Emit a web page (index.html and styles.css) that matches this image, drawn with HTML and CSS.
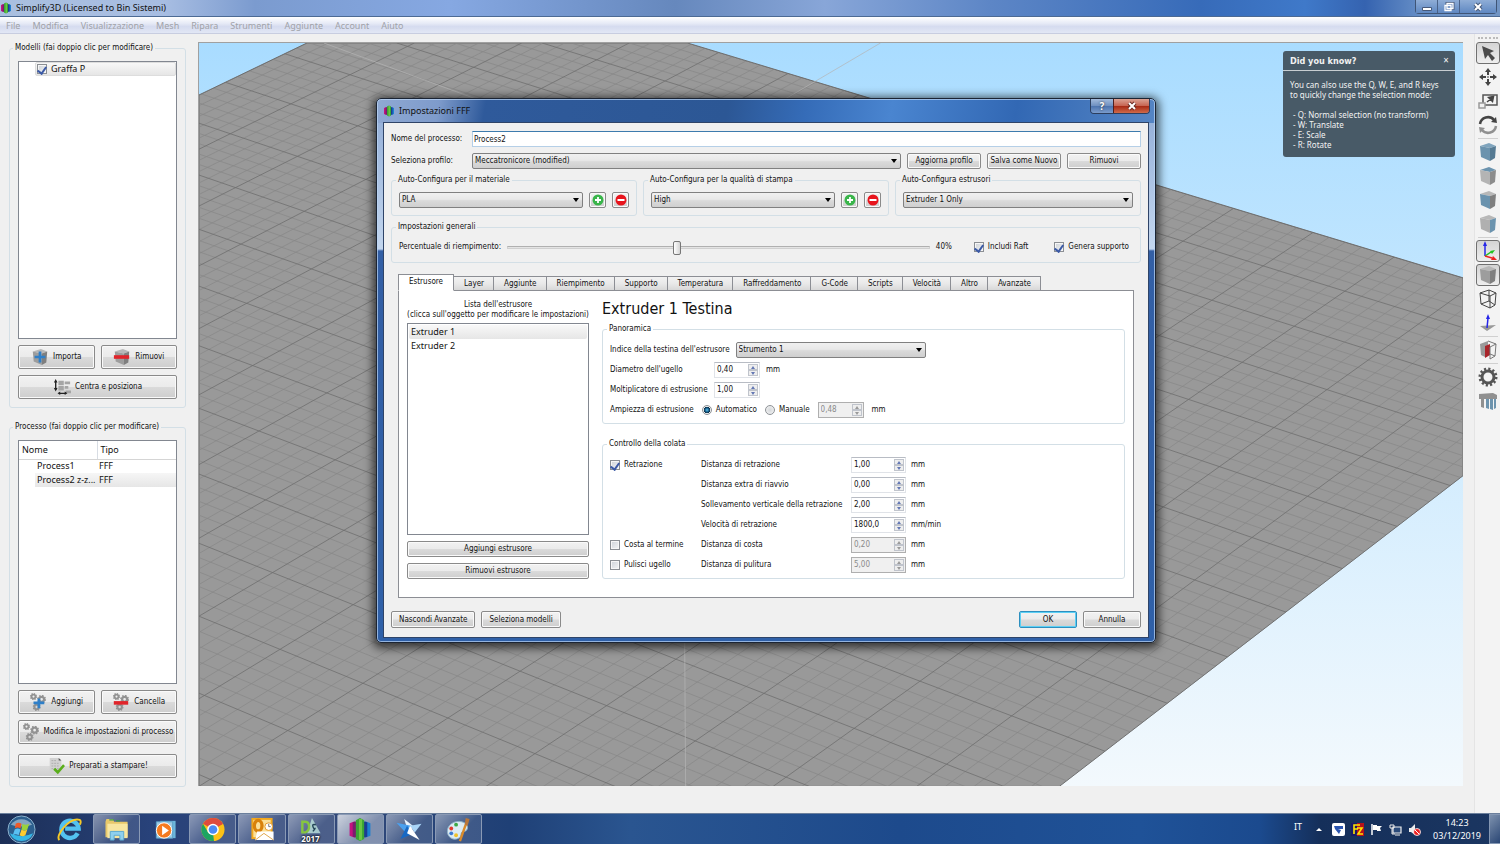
FILE: index.html
```html
<!DOCTYPE html>
<html lang="it">
<head>
    <meta charset="UTF-8">
    <meta name="viewport" content="width=device-width, initial-scale=1.0">
    <title>Simplify3D (Licensed to Bin Sistemi)</title>
    <link rel="stylesheet" href="styles.css">
</head>
<body>
    <!-- Simboli condivisi -->
    <svg class="symbols" aria-hidden="true">
        <symbol id="logo" viewBox="0 0 24 24">
            <path d="M2 6l5-2v16l-5-2z" fill="#c4127e"/>
            <path d="M5 5l4-1v16l-4-1z" fill="#7a1d6e"/>
            <path d="M22 6l-5-2v16l5-2z" fill="#1c7fd0"/>
            <path d="M19 5l-4-1v16l4-1z" fill="#1b3c92"/>
            <path d="M8 3l4-2 4 2v18l-4 2-4-2z" fill="#3aa535"/>
            <path d="M11 2h3v20h-3z" fill="#6cc644"/>
        </symbol>
        <symbol id="cube" viewBox="0 0 20 20">
            <path class="top" d="M2 4l9-3 7 3-6 2z"/>
            <path class="front" d="M2 4l10 2v13l-9-4z"/>
            <path class="side" d="M12 6l6-2-1 12-5 3z"/>
        </symbol>
        <symbol id="gear" viewBox="0 0 20 20">
            <circle cx="10" cy="10" r="6" fill="none" stroke="currentColor" stroke-width="3"/>
            <circle cx="10" cy="10" r="8" fill="none" stroke="currentColor" stroke-width="3" stroke-dasharray="2.1 2.09"/>
        </symbol>
        <symbol id="small-gear" viewBox="0 0 20 20">
            <circle cx="10" cy="10" r="5.500" fill="none" stroke="currentColor" stroke-width="5"/>
            <circle cx="10" cy="10" r="8.500" fill="none" stroke="currentColor" stroke-width="3" stroke-dasharray="3.340 3.340"/>
        </symbol>
        <symbol id="add" viewBox="0 0 12 12">
            <circle cx="6" cy="6" r="5.500" fill="#39b54a"/>
            <path d="M6 3v6M3 6h6" stroke="#fff" stroke-width="1.800"/>
        </symbol>
        <symbol id="remove" viewBox="0 0 12 12">
            <circle cx="6" cy="6" r="5.500" fill="#e8141c"/>
            <path d="M2.500 6h7" stroke="#fff" stroke-width="2"/>
        </symbol>
    </svg>

    <header class="titlebar">
        <svg class="app-logo"><use href="#logo"/></svg>
        <h1>Simplify3D (Licensed to Bin Sistemi)</h1>
        <div class="window-buttons">
            <button type="button" aria-label="Riduci a icona"><svg viewBox="0 0 12 10"><path d="M1.500 5.500h9v3h-9z" fill="#fff" stroke="#46597a"/></svg></button>
            <button type="button" aria-label="Ripristina"><svg viewBox="0 0 12 10"><path d="M4 1.500h6v5H4z" fill="none" stroke="#46597a" stroke-width="3"/><path d="M4 1.500h6v5H4zM2 3.500h6v5H2z" fill="#5a7fb8" stroke="#fff" stroke-width="1.300"/></svg></button>
            <button type="button" class="wide" aria-label="Chiudi"><svg viewBox="0 0 12 10"><path d="M3 2l6 6M9 2L3 8" stroke="#46597a" stroke-width="4"/><path d="M3 2l6 6M9 2L3 8" stroke="#fff" stroke-width="2"/></svg></button>
        </div>
    </header>

    <nav class="menubar">
        <a href="#">File</a>
        <a href="#">Modifica</a>
        <a href="#">Visualizzazione</a>
        <a href="#">Mesh</a>
        <a href="#">Ripara</a>
        <a href="#">Strumenti</a>
        <a href="#">Aggiunte</a>
        <a href="#">Account</a>
        <a href="#">Aiuto</a>
    </nav>

    <main class="workspace">
        <aside class="sidebar">
            <fieldset class="panel">
                <legend>Modelli (fai doppio clic per modificare)</legend>
                <div class="list">
                    <label class="model selected"><input type="checkbox" checked> Graffa P</label>
                </div>
                <div class="button-row">
                    <button type="button" class="btn big">
                        <svg class="icon grey-cube" viewBox="0 0 20 20"><use href="#cube"/><path d="M10 4v12M4 10h12" stroke="#2f7fc8" stroke-width="3"/></svg>
                        Importa
                    </button>
                    <button type="button" class="btn big">
                        <svg class="icon grey-cube" viewBox="0 0 20 20"><use href="#cube"/><path d="M1 10h17" stroke="#e0242a" stroke-width="4"/></svg>
                        Rimuovi
                    </button>
                </div>
                <button type="button" class="btn big">
                    <svg class="icon" viewBox="0 0 20 20"><path d="M6 3h6v5H6zM13 4h6v3h-6zM6 9h6v5H6zM13 9h4v3h-4zM14 14h6v3h-6z" fill="#a5a5a5"/><path d="M3 4v9M7 17h7" stroke="#222" stroke-width="1.500"/><path d="M3 1l2 4H1zM3 15l2-4H1zM5 17l3-2v4zM16 17l-3-2v4z" fill="#222"/></svg>
                    Centra e posiziona
                </button>
            </fieldset>

            <fieldset class="panel">
                <legend>Processo (fai doppio clic per modificare)</legend>
                <div class="list">
                    <table class="processes">
                        <thead>
                            <tr><th>Nome</th><th>Tipo</th></tr>
                        </thead>
                        <tbody>
                            <tr><td>Process1</td><td>FFF</td></tr>
                            <tr class="selected"><td>Process2 z-z...</td><td>FFF</td></tr>
                        </tbody>
                    </table>
                </div>
                <div class="button-row">
                    <button type="button" class="btn big">
                        <svg class="icon gears" viewBox="0 0 20 20"><use href="#small-gear" x="1" y="0" width="8" height="8"/><use href="#small-gear" x="9" y="2" width="10" height="10"/><use href="#small-gear" x="4" y="11" width="9" height="9"/><path d="M11 6v11M5 11h12" stroke="#2f7fc8" stroke-width="3"/></svg>
                        Aggiungi
                    </button>
                    <button type="button" class="btn big">
                        <svg class="icon gears" viewBox="0 0 20 20"><use href="#small-gear" x="1" y="0" width="8" height="8"/><use href="#small-gear" x="9" y="2" width="10" height="10"/><use href="#small-gear" x="4" y="11" width="9" height="9"/><path d="M2 11h16" stroke="#e0242a" stroke-width="4"/></svg>
                        Cancella
                    </button>
                </div>
                <button type="button" class="btn big">
                    <svg class="icon gears" viewBox="0 0 20 20"><use href="#small-gear" x="1" y="0" width="8" height="8"/><use href="#small-gear" x="9" y="3" width="10" height="10"/><use href="#small-gear" x="4" y="11" width="9" height="9"/></svg>
                    Modifica le impostazioni di processo
                </button>
                <button type="button" class="btn big prepare">
                    <svg class="icon" viewBox="0 0 20 20"><path d="M3 1h10l3 3v14H3z" fill="#d2d2d2"/><path d="M13 1l3 3h-3z" fill="#555"/><path d="M5 4h6M5 7h9M5 10h9M5 13h9" stroke="#aaa" stroke-dasharray="2 1"/><path d="M8 13l4 4 7-8" fill="none" stroke="#5aae1c" stroke-width="3"/></svg>
                    Preparati a stampare!
                </button>
            </fieldset>
        </aside>

        <section class="viewport">
            <svg id="scene" class="scene" viewBox="0 0 1265 744" preserveAspectRatio="xMinYMin slice">
                <clipPath id="bed"><path d="M0 52L108 0h381l776 235v198L861 744H0z"/></clipPath>
                <path class="bed" d="M0 52L108 0h381l776 235v198L861 744H0z"/>
                <g id="minor" class="minor" clip-path="url(#bed)"></g>
                <g id="major" class="major" clip-path="url(#bed)"></g>
                <path class="volume" d="M125 0l250 92M682 0L580 60M486 590l1 154"/>
            </svg>
            <div class="tip">
                <div class="tip-head">
                    <strong>Did you know?</strong>
                    <button type="button" aria-label="Close">✕</button>
                </div>
                <div class="tip-body">
                    <p>You can also use the Q, W, E, and R keys<br>to quickly change the selection mode:</p>
                    <ul>
                        <li>- Q: Normal selection (no transform)</li>
                        <li>- W: Translate</li>
                        <li>- E: Scale</li>
                        <li>- R: Rotate</li>
                    </ul>
                </div>
            </div>
        </section>

        <div class="toolbar">
            <button type="button" class="active" aria-label="Seleziona"><svg viewBox="0 0 20 20"><path d="M4 3l12 5-4 2 5 5-3 3-4-6-3 4z" fill="#4a4a4a"/></svg></button>
            <button type="button" aria-label="Sposta"><svg viewBox="0 0 20 20"><path d="M10 1l3 4H7zM10 19l3-4H7zM1 10l4-3v6zM19 10l-4-3v6z" fill="#444"/><path d="M10 5v3M10 12v3M5 10h3M12 10h3" stroke="#444" stroke-width="2"/><path d="M9 9h2v2H9z" fill="#999"/></svg></button>
            <button type="button" aria-label="Scala"><svg viewBox="0 0 20 20"><path d="M5 4h14v10H5z" fill="none" stroke="#555" stroke-width="1.500"/><path d="M1 12h6v5H1z" fill="#f0f0f0" stroke="#999" stroke-width="1.500"/><path d="M9 11l5-4M15.500 5.500l-1 5-4-4z" stroke="#444" stroke-width="1.500" fill="#444"/></svg></button>
            <button type="button" aria-label="Ruota"><svg viewBox="0 0 20 20"><path d="M2 9a8 8 0 0 1 14-4" fill="none" stroke="#444" stroke-width="2.500"/><path d="M19 8l-6-1 5-5z" fill="#444"/><path d="M18 11a8 8 0 0 1-14 4" fill="none" stroke="#909090" stroke-width="2.500"/><path d="M1 12l6 1-5 5z" fill="#909090"/></svg></button>
            <hr>
            <button type="button" class="cube-all" aria-label="Vista predefinita"><svg><use href="#cube"/></svg></button>
            <button type="button" class="cube-top" aria-label="Vista superiore"><svg><use href="#cube"/></svg></button>
            <button type="button" class="cube-front" aria-label="Vista frontale"><svg><use href="#cube"/></svg></button>
            <button type="button" class="cube-side" aria-label="Vista laterale"><svg><use href="#cube"/></svg></button>
            <hr>
            <button type="button" class="active" aria-label="Assi"><svg viewBox="0 0 20 20"><path d="M7 15V4" stroke="#2626e8" stroke-width="1.500"/><path d="M7 0l2 5H5z" fill="#2626e8"/><path d="M7 15l6-4" stroke="#1fc41f" stroke-width="1.500"/><path d="M17 9l-3 4-2-3z" fill="#1fc41f"/><path d="M7 15l7 2" stroke="#e22" stroke-width="1.500"/><path d="M19 19l-6 0 2-4z" fill="#e22"/></svg></button>
            <button type="button" class="active" aria-label="Solido"><svg class="grey-cube"><use href="#cube"/></svg></button>
            <button type="button" aria-label="Wireframe"><svg viewBox="0 0 20 20"><path d="M2 4l9-3 7 3-6 3zM2 4l1 11 9 4V7M18 4l-1 12-5 3M11 1v11l-8 3M11 12l6 4" fill="none" stroke="#444"/></svg></button>
            <button type="button" aria-label="Normali"><svg viewBox="0 0 20 20"><path d="M2 13l16-1-9 6z" fill="#999"/><path d="M9 15l1-10" stroke="#2626e8" stroke-width="1.500"/><path d="M10 1l2 5H8z" fill="#2626e8"/></svg></button>
            <hr>
            <button type="button" aria-label="Sezione"><svg viewBox="0 0 20 20"><path d="M2 4l8-3v4l-3 2v10l-4-2z" fill="#9a9a9a"/><path d="M7 6l5-2v11l-5 3z" fill="#a8242a"/><path d="M10 1l8 3-1 12-5 3V7l6-3M12 14l5 2" fill="none" stroke="#777"/></svg></button>
            <hr>
            <button type="button" class="dark" aria-label="Impostazioni"><svg><use href="#gear"/></svg></button>
            <button type="button" aria-label="Supporti"><svg viewBox="0 0 20 20"><path d="M1 3l14-1 4 2v4H6v9l-3-1V8H1z" fill="#909090"/><path d="M8 8h3v10l-3-1zM12 8h3v11l-3-1zM16 8h2v9l-2 1z" fill="#6d93ad"/></svg></button>
        </div>
    </main>

    <footer class="taskbar">
        <button type="button" class="start" aria-label="Start">
            <svg viewBox="0 0 30 30"><circle cx="15" cy="15" r="14" fill="#2c5f8e" stroke="#8fb4cf"/><path d="M3 19a13 13 0 0 0 24 0q-12 6-24 0z" fill="#35b7e6"/><path d="M4 10a13 12 0 0 1 22 0q-11 4-22 0z" fill="#a9c3d6" opacity=".7"/><path d="M9 9q3-2 6 0l-1 5q-3-2-6 0z" fill="#f05a28"/><path d="M16 9q3 2 7 0l-2 6q-3 2-6 0z" fill="#9ad23c"/><path d="M8 15q3-2 6 0l-2 6q-3-2-6 0z" fill="#5ac0f2"/><path d="M15 15q3 2 6 0l-2 6q-3 2-6 0z" fill="#fccb2f"/></svg>
        </button>
        <div class="apps">
            <button type="button" aria-label="Internet Explorer"><svg viewBox="0 0 26 26"><path d="M22 17a9 9 0 1 1 1-5H9" fill="none" stroke="#53c1f0" stroke-width="4.500"/><path d="M3 24C-2 19 14 0 24 3c2 1 1 4 0 5" fill="none" stroke="#f6c927" stroke-width="2"/></svg></button>
            <button type="button" class="open" aria-label="Esplora risorse"><svg viewBox="0 0 26 26"><path d="M1 5l1-3h7l1 3h14v16H1z" fill="#e8c86a"/><path d="M3 7h21v15H3z" fill="#f8e6a0"/><path d="M5 3h5M12 4h4" stroke="#3a9c4a" stroke-width="1.500"/><path d="M6 24v-9h14v9h-4v-5h-6v5z" fill="#8fd0ee" stroke="#5aa9d0"/></svg></button>
            <button type="button" aria-label="Windows Media Player"><svg viewBox="0 0 26 26"><path d="M8 4h16v18H8z" fill="#6cb6dc"/><path d="M4 5h17v17H4z" fill="#9dcbe4" stroke="#5b9fc9"/><circle cx="12" cy="14" r="8" fill="#f47a20" stroke="#fff"/><path d="M10 9l7 5-7 5z" fill="#fff"/></svg></button>
            <button type="button" class="open" aria-label="Chrome"><svg viewBox="0 0 26 26"><circle cx="13" cy="13" r="12" fill="#fbc116"/><path d="M13 13L2.600 7A12 12 0 0 1 23.400 7z" fill="#dd4b3e"/><path d="M2.600 7L8 16l5 0 1 9A12 12 0 0 1 2.600 7z" fill="#1da462"/><path d="M13 7h10.400L13 13z" fill="#dd4b3e"/><circle cx="13" cy="13" r="6" fill="#fff"/><circle cx="13" cy="13" r="4.500" fill="#4a8af4"/></svg></button>
            <button type="button" class="open" aria-label="Outlook"><svg viewBox="0 0 26 26"><path d="M2 1h22v22H2z" fill="#f2a81d"/><path d="M4 3h18v18H4z" fill="#fbe09a"/><ellipse cx="9" cy="9" rx="4" ry="5.500" fill="none" stroke="#d9820c" stroke-width="3.500"/><path d="M8 15h17v9H6z" fill="#fff"/><path d="M6 24l9-7 10 7" fill="none" stroke="#e0a64a"/><circle cx="20" cy="10" r="4" fill="#fff" stroke="#e79a28"/><path d="M20 7v3h2" stroke="#777" fill="none"/></svg></button>
            <button type="button" class="open" aria-label="DraftSight 2017"><svg viewBox="0 0 26 26"><path d="M14 1l9 16H9z" fill="#b6dcd8" opacity=".85"/><path d="M4 5h3q4 0 4 5t-4 6H4z" fill="none" stroke="#86c540" stroke-width="2.500"/><path d="M18 8q-4-1-3 2t2 2-2 3" fill="none" stroke="#245" stroke-width="1.500"/></svg><span class="year">2017</span></button>
            <button type="button" class="open current" aria-label="Simplify3D"><svg><use href="#logo"/></svg></button>
            <button type="button" class="open" aria-label="Slicer"><svg viewBox="0 0 26 26"><path d="M8 2l10 8-6 5z" fill="#e8f3fc"/><path d="M0 6l15 3-4 9z" fill="#4aa0ee"/><path d="M14 9l12-2-7 9z" fill="#a9d4f7"/><path d="M11 9l-7 14 12-5z" fill="#1768c4"/><path d="M14 9l10 15-13-7z" fill="#fff"/></svg></button>
            <button type="button" class="open" aria-label="Paint"><svg viewBox="0 0 26 26"><path d="M2 16C1 8 10 3 17 5c8 2 7 10 2 10-4 0-2 4-4 6-4 4-12 2-13-5z" fill="#dcebf3" stroke="#8fb3c9"/><circle cx="6" cy="12" r="2" fill="#e0392f"/><circle cx="11" cy="8" r="2" fill="#3aa845"/><circle cx="6" cy="17" r="2" fill="#3b7bd4"/><circle cx="11" cy="19" r="2" fill="#f0c22a"/><path d="M21 8l-6 17" stroke="#d98a2b" stroke-width="2.500"/><path d="M20 8l1-7 4 1-2 7z" fill="#b8763a"/></svg></button>
        </div>
        <div class="tray">
            <span class="lang">IT</span>
            <svg class="caret" viewBox="0 0 6 4"><path d="M0 4l3-3 3 3z" fill="#fff"/></svg>
            <svg viewBox="0 0 13 13"><rect width="13" height="13" rx="2" fill="#fff"/><path d="M2 3h9v3H6l3 1-2 4-4-5z" fill="#2a55b0"/></svg>
            <svg viewBox="0 0 13 13"><path d="M0 0h13v13H0z" fill="#b5121b"/><path d="M0 0h6v13H0z" fill="#1a1a66"/><path d="M3 11V2h6M3 6h4M6 5h5l-4 6h5" fill="none" stroke="#ffe600" stroke-width="1.600"/></svg>
            <svg viewBox="0 0 13 13"><path d="M2 1v11" stroke="#fff" stroke-width="1.500"/><path d="M3 2h4v1h5l-2 2 1 3H7V7H3z" fill="#fff"/></svg>
            <svg viewBox="0 0 13 13"><path d="M4 4h8v6H4zM6 12h5" fill="#2a4a7a" stroke="#eee" stroke-width="1.200"/><path d="M1 2h4v3H1zM3 5v6h3" fill="none" stroke="#eee"/></svg>
            <svg viewBox="0 0 13 13"><path d="M1 5h2l4-4v11L3 9H1z" fill="#eee"/><circle cx="9" cy="9" r="3.500" fill="#e22" stroke="#fff" stroke-width=".8"/><path d="M7 7l4 4" stroke="#fff"/></svg>
            <time class="clock" datetime="2019-12-03T14:23"><span>14:23</span><span>03/12/2019</span></time>
            <button type="button" class="show-desktop" aria-label="Mostra desktop"></button>
        </div>
    </footer>

    <!-- Finestra impostazioni -->
    <div class="dialog" role="dialog" aria-labelledby="dialogTitle">
        <div class="dialog-title">
            <svg class="app-logo"><use href="#logo"/></svg>
            <h2 id="dialogTitle">Impostazioni FFF</h2>
            <div class="dialog-buttons">
                <button type="button" aria-label="Guida">?</button>
                <button type="button" class="close" aria-label="Chiudi"><svg viewBox="0 0 12 10"><path d="M3 2l6 6M9 2L3 8" stroke="#6b2a22" stroke-width="4"/><path d="M3 2l6 6M9 2L3 8" stroke="#fff" stroke-width="2"/></svg></button>
            </div>
        </div>

        <form class="dialog-body">
            <div class="row">
                <label class="main-label" for="nome">Nome del processo:</label>
                <input class="text" type="text" id="nome" value="Process2" autofocus>
            </div>
            <div class="row">
                <label class="main-label" for="profilo">Seleziona profilo:</label>
                <div class="select"><select id="profilo"><option>Meccatronicore (modified)</option></select></div>
                <button type="button" class="btn third">Aggiorna profilo</button>
                <button type="button" class="btn third">Salva come Nuovo</button>
                <button type="button" class="btn third">Rimuovi</button>
            </div>

            <div class="auto">
                <fieldset class="group">
                    <legend>Auto-Configura per il materiale</legend>
                    <div class="row">
                        <div class="select"><select aria-label="Materiale"><option>PLA</option></select></div>
                        <button type="button" class="btn square" aria-label="Aggiungi materiale"><svg><use href="#add"/></svg></button>
                        <button type="button" class="btn square" aria-label="Rimuovi materiale"><svg><use href="#remove"/></svg></button>
                    </div>
                </fieldset>
                <fieldset class="group">
                    <legend>Auto-Configura per la qualità di stampa</legend>
                    <div class="row">
                        <div class="select"><select aria-label="Qualità"><option>High</option></select></div>
                        <button type="button" class="btn square" aria-label="Aggiungi qualità"><svg><use href="#add"/></svg></button>
                        <button type="button" class="btn square" aria-label="Rimuovi qualità"><svg><use href="#remove"/></svg></button>
                    </div>
                </fieldset>
                <fieldset class="group">
                    <legend>Auto-Configura estrusori</legend>
                    <div class="row">
                        <div class="select"><select aria-label="Estrusori"><option>Extruder 1 Only</option></select></div>
                    </div>
                </fieldset>
            </div>

            <fieldset class="group general">
                <legend>Impostazioni generali</legend>
                <div class="row">
                    <label for="riempimento">Percentuale di riempimento:</label>
                    <input class="slider" type="range" id="riempimento" min="0" max="100" value="40">
                    <output for="riempimento">40%</output>
                    <label class="check"><input type="checkbox" checked> Includi Raft</label>
                    <label class="check"><input type="checkbox" checked> Genera supporto</label>
                </div>
            </fieldset>

            <div class="tabs" role="tablist">
                <button type="button" role="tab" aria-selected="true">Estrusore</button>
                <button type="button" role="tab">Layer</button>
                <button type="button" role="tab">Aggiunte</button>
                <button type="button" role="tab">Riempimento</button>
                <button type="button" role="tab">Supporto</button>
                <button type="button" role="tab">Temperatura</button>
                <button type="button" role="tab">Raffreddamento</button>
                <button type="button" role="tab">G-Code</button>
                <button type="button" role="tab">Scripts</button>
                <button type="button" role="tab">Velocità</button>
                <button type="button" role="tab">Altro</button>
                <button type="button" role="tab">Avanzate</button>
            </div>

            <div class="tab-panel">
                <div class="extruders">
                    <p>Lista dell'estrusore<br>(clicca sull'oggetto per modificare le impostazioni)</p>
                    <ul class="list">
                        <li class="selected">Extruder 1</li>
                        <li>Extruder 2</li>
                    </ul>
                    <button type="button" class="btn">Aggiungi estrusore</button>
                    <button type="button" class="btn">Rimuovi estrusore</button>
                </div>

                <div class="details">
                    <h3>Extruder 1 Testina</h3>
                    <fieldset class="group overview">
                        <legend>Panoramica</legend>
                        <div class="row">
                            <label for="indice">Indice della testina dell'estrusore</label>
                            <div class="select index"><select id="indice"><option>Strumento 1</option></select></div>
                        </div>
                        <div class="row">
                            <label class="nozzle-label" for="diametro">Diametro dell'ugello</label>
                            <span class="spin"><input type="text" id="diametro" value="0,40"><span class="arrows"><button type="button" aria-label="Su"></button><button type="button" aria-label="Giù"></button></span></span>
                            <span>mm</span>
                        </div>
                        <div class="row">
                            <label class="nozzle-label" for="moltiplicatore">Moltiplicatore di estrusione</label>
                            <span class="spin"><input type="text" id="moltiplicatore" value="1,00"><span class="arrows"><button type="button" aria-label="Su"></button><button type="button" aria-label="Giù"></button></span></span>
                        </div>
                        <div class="row width-row">
                            <span>Ampiezza di estrusione</span>
                            <label class="check"><input type="radio" name="ampiezza" checked> Automatico</label>
                            <label class="check"><input type="radio" name="ampiezza"> Manuale</label>
                            <span class="spin"><input type="text" aria-label="Ampiezza" value="0,48" disabled><span class="arrows"><button type="button" aria-label="Su" disabled></button><button type="button" aria-label="Giù" disabled></button></span></span>
                            <span>mm</span>
                        </div>
                    </fieldset>

                    <fieldset class="group ooze">
                        <legend>Controllo della colata</legend>
                        <div class="ooze-grid">
                            <label class="check"><input type="checkbox" checked> Retrazione</label>
                            <label for="retrazione">Distanza di retrazione</label>
                            <span class="spin"><input type="text" id="retrazione" value="1,00"><span class="arrows"><button type="button" aria-label="Su"></button><button type="button" aria-label="Giù"></button></span></span>
                            <span>mm</span>

                            <label class="second" for="riavvio">Distanza extra di riavvio</label>
                            <span class="spin"><input type="text" id="riavvio" value="0,00"><span class="arrows"><button type="button" aria-label="Su"></button><button type="button" aria-label="Giù"></button></span></span>
                            <span>mm</span>

                            <label class="second" for="sollevamento">Sollevamento verticale della retrazione</label>
                            <span class="spin"><input type="text" id="sollevamento" value="2,00"><span class="arrows"><button type="button" aria-label="Su"></button><button type="button" aria-label="Giù"></button></span></span>
                            <span>mm</span>

                            <label class="second" for="velocita">Velocità di retrazione</label>
                            <span class="spin"><input type="text" id="velocita" value="1800,0"><span class="arrows"><button type="button" aria-label="Su"></button><button type="button" aria-label="Giù"></button></span></span>
                            <span>mm/min</span>

                            <label class="check"><input type="checkbox"> Costa al termine</label>
                            <label for="costa">Distanza di costa</label>
                            <span class="spin"><input type="text" id="costa" value="0,20" disabled><span class="arrows"><button type="button" aria-label="Su" disabled></button><button type="button" aria-label="Giù" disabled></button></span></span>
                            <span>mm</span>

                            <label class="check"><input type="checkbox"> Pulisci ugello</label>
                            <label for="pulitura">Distanza di pulitura</label>
                            <span class="spin"><input type="text" id="pulitura" value="5,00" disabled><span class="arrows"><button type="button" aria-label="Su" disabled></button><button type="button" aria-label="Giù" disabled></button></span></span>
                            <span>mm</span>
                        </div>
                    </fieldset>
                </div>
            </div>

            <div class="dialog-footer">
                <button type="button" class="btn">Nascondi Avanzate</button>
                <button type="button" class="btn">Seleziona modelli</button>
                <button type="submit" class="btn ok">OK</button>
                <button type="button" class="btn cancel">Annulla</button>
            </div>
        </form>
    </div>

    <script src="script.js"></script>
</body>
</html>
```
FILE: styles.css
```css
:root {
    --ui: "DejaVu Sans Condensed", "DejaVu Sans", sans-serif;
    --segoe: "Noto Sans", "Open Sans", sans-serif;
    --face: #f0f0f0;
    --group: #d3dfe6;
    --edge: #828790;
    --text: #111;
}

* {
    margin: 0;
    padding: 0;
    box-sizing: border-box;
}

body {
    height: 100vh;
    display: flex;
    flex-direction: column;
    position: relative;
    overflow: hidden;
    background: var(--face);
    color: var(--text);
    font-family: var(--ui);
    font-size: 8px;
    line-height: 10px;
}

button,
input,
select {
    font: inherit;
    color: inherit;
}

button {
    border: none;
    background: none;
}

ul {
    list-style: none;
}

.symbols {
    width: 0;
    height: 0;
    position: absolute;
}

/* Barra del titolo */
.titlebar {
    height: 17px;
    display: flex;
    align-items: center;
    border-bottom: 1px solid #4c6a94;
    background: linear-gradient(90deg, #a9bfdf 0, #a7bde2 11%, #7b9bcf 17%, #86a8e2 30%, #6688bd 45%, #88a6d8 55%, #5d86c6 66%, #376bb9 80%, #3f79c9 87%, #3563b0 91%, #6a92c8 95%, #7295c4 100%);
    font-family: var(--segoe);
}

.app-logo {
    width: 12px;
    height: 12px;
}

.titlebar h1 {
    flex: 1;
    margin-left: 4px;
    font-size: 9px;
    font-weight: 400;
}

.window-buttons {
    display: flex;
    align-self: flex-start;
    margin-right: 3px;
    border: 1px solid #3f5576;
    border-top: none;
    border-radius: 0 0 4px 4px;
}

.window-buttons button {
    width: 22px;
    height: 13px;
    display: grid;
    place-items: center;
    border-right: 1px solid #4a6288;
    background: linear-gradient(#8fadd6, #5f88c2);
}

.window-buttons .wide {
    width: 36px;
    border-right: none;
}

.window-buttons svg {
    width: 12px;
    height: 10px;
}

/* Menu */
.menubar {
    height: 17px;
    display: flex;
    align-items: center;
    gap: 12px;
    padding: 1px 6px 0;
    border-bottom: 1px solid #c8cde0;
    background: linear-gradient(#fff, #e6eaf6 40%, #d5dbef 60%, #e2e7f5);
    font-family: var(--segoe);
    font-size: 9px;
}

.menubar a {
    color: #a0a2a8;
    text-decoration: none;
}

/* Area di lavoro */
.workspace {
    flex: 1;
    display: flex;
    min-height: 0;
}

.sidebar {
    width: 198px;
    display: flex;
    flex-direction: column;
    gap: 14px;
    padding: 9px 12px 26px 9px;
}

.panel {
    flex: 1;
    min-height: 0;
    min-width: 0;
    display: flex;
    flex-direction: column;
    gap: 6px;
    padding: 8px;
    border: 1px solid var(--group);
    border-radius: 3px;
}

.panel legend {
    margin-left: -5px;
    padding: 0 2px;
}

.list {
    flex: 1;
    border: 1px solid var(--edge);
    background: #fff;
}

.selected {
    background: linear-gradient(#f8f8f8, #e6e6e6);
    border-radius: 2px;
}

.model {
    display: flex;
    align-items: center;
    gap: 4px;
    height: 14px;
    margin-left: 16px;
    padding-left: 1px;
    border: 1px solid #ddd;
    font-family: var(--segoe);
    font-size: 9px;
}

.processes {
    width: 100%;
    table-layout: fixed;
    border-collapse: collapse;
    font-family: var(--segoe);
    font-size: 9px;
}

.processes th {
    height: 18px;
    padding-left: 3px;
    border-bottom: 1px solid #d5d5d5;
    font-weight: 400;
    text-align: left;
}

.processes th + th {
    border-left: 1px solid #d8dde4;
}

.processes th:first-child {
    width: 78px;
}

.processes td {
    height: 14px;
    padding-left: 2px;
    white-space: nowrap;
}

.processes tr.selected {
    background: none;
}

.processes td:first-child {
    padding-left: 18px;
}

.processes .selected td {
    background: linear-gradient(#f6f6f6, #e6e6e6);
}

.processes .selected td:first-child {
    background: linear-gradient(90deg, #fff 16px, transparent 16px), linear-gradient(#f6f6f6, #e6e6e6);
}

.button-row {
    display: flex;
    gap: 6px;
}

.button-row .btn {
    flex: 1;
}

.btn {
    height: 16px;
    display: flex;
    align-items: center;
    justify-content: center;
    border: 1px solid #8a8a8a;
    border-radius: 2px;
    box-shadow: inset 0 0 0 1px #fafafa;
    background: linear-gradient(#f2f2f2, #ebebeb 48%, #dadada 52%, #cecece);
    white-space: nowrap;
}

.btn.big {
    height: 24px;
    gap: 4px;
}

.prepare {
    margin-top: 4px;
}

.icon {
    flex: none;
    width: 18px;
    height: 18px;
}

.gears {
    color: #929292;
}

.grey-cube,
.toolbar button {
    --top: #b8b8b8;
    --front: #9d9d9d;
    --side: #7f7f7f;
}

.top {
    fill: var(--top);
}

.front {
    fill: var(--front);
}

.side {
    fill: var(--side);
}

/* Vista 3D */
.viewport {
    flex: 1;
    min-width: 0;
    position: relative;
    margin: 8px 11px 27px 0;
    border-top: 1px solid #a0a0a0;
    border-left: 1px solid #a0a0a0;
    background: linear-gradient(#a9dcff, #f3f9fd);
}

.scene {
    display: block;
    width: 100%;
    height: 100%;
}

.bed {
    fill: #999;
    stroke: #707070;
}

.minor {
    stroke: #868686;
    stroke-width: .7;
}

.major {
    stroke: #6e6e6e;
    stroke-width: .8;
}

.volume {
    fill: none;
    stroke: #b4b4b4;
    stroke-width: .7;
}

.tip {
    position: absolute;
    top: 8px;
    right: 8px;
    width: 172px;
    border-radius: 3px;
    background: #485a67;
    color: #f2f2f2;
}

.tip-head {
    height: 20px;
    display: flex;
    align-items: center;
    justify-content: space-between;
    padding: 1px 6px 0 7px;
    border-bottom: 1px solid #c8ced2;
}

.tip-head strong {
    font-size: 9px;
}

.tip-body {
    padding: 9px 7px 7px;
    font-family: var(--segoe);
}

.tip-body ul {
    margin-top: 10px;
    padding-left: 3px;
}

/* Barra strumenti */
.toolbar {
    width: 26px;
    display: flex;
    flex-direction: column;
    align-items: center;
    gap: 2px;
    padding-top: 3px;
    border-left: 1px solid #e4e4e4;
    background: #f3f3f3;
}

.toolbar::before {
    content: '';
    width: 20px;
    border-top: 2px dotted #bbb;
    margin-bottom: 1px;
}

.toolbar button {
    width: 24px;
    height: 22px;
    display: grid;
    place-items: center;
}

.toolbar .active {
    border: 1px solid #707070;
    border-radius: 3px;
    background: linear-gradient(#d4d4d4, #eee);
}

.toolbar svg {
    width: 20px;
    height: 20px;
}

.toolbar hr {
    width: 20px;
    height: 1px;
    border: none;
    background: #d0d0d0;
}

.toolbar .cube-all {
    --top: #7fa4bd;
    --front: #6b93ae;
    --side: #557a93;
}

.toolbar .cube-top {
    --top: #6b93ae;
    --front: #b4b4b4;
    --side: #8c8c8c;
}

.toolbar .cube-front {
    --front: #6b93ae;
}

.toolbar .cube-side {
    --front: #b0b0b0;
    --side: #6b93ae;
}

.toolbar .dark {
    color: #555;
}

/* Barra delle applicazioni */
.taskbar {
    height: 31px;
    display: flex;
    align-items: stretch;
    border-top: 1px solid #6b7f9c;
    background: linear-gradient(90deg, #1c2f57 0, #28427a 10%, #33497a 22%, #1f4076 34%, #2a5590 42%, #1d4a8c 60%, #1f5298 76%, #1b4a8e 84%, #152f5a 88%, #1b3661 100%);
    color: #fff;
    font-family: var(--segoe);
    font-size: 9px;
}

.start {
    width: 42px;
    display: grid;
    place-items: center;
}

.start svg {
    width: 29px;
    height: 29px;
}

.apps {
    width: 436px;
    display: flex;
    gap: 2px;
    margin-left: 4px;
}

.apps button {
    flex: 1;
    display: grid;
    place-items: center;
    position: relative;
    border-radius: 2px;
}

.apps .open {
    border: 1px solid #8a9ab5;
    background: linear-gradient(135deg, rgba(255, 255, 255, .45), rgba(255, 255, 255, .12) 60%);
}

.apps .current {
    background: linear-gradient(135deg, rgba(255, 255, 255, .75), rgba(255, 255, 255, .4) 60%);
}

.apps svg {
    width: 26px;
    height: 25px;
}

.year {
    position: absolute;
    right: 14px;
    bottom: 0;
    font-size: 8px;
    font-weight: 700;
    line-height: 8px;
    text-shadow: 0 0 2px #000, 0 0 2px #000;
}

.tray {
    display: flex;
    align-items: center;
    gap: 6px;
    margin-left: auto;
}

.lang {
    margin-right: 8px;
    padding-bottom: 4px;
}

.tray svg {
    width: 13px;
    height: 13px;
}

.tray .caret {
    width: 6px;
    height: 4px;
    margin-right: 4px;
}

.clock {
    display: flex;
    flex-direction: column;
    align-items: center;
    margin: 0 2px 0 6px;
    line-height: 13px;
}

.show-desktop {
    width: 11px;
    align-self: stretch;
    border: 1px solid #8497b3;
    border-right: none;
    background: linear-gradient(135deg, #7d91ae, #2a4674);
}

/* Finestra di dialogo */
.dialog {
    position: absolute;
    top: 98px;
    left: 376px;
    width: 780px;
    padding: 0 6px 4px;
    border: 1px solid #1b2433;
    border-radius: 5px;
    background: linear-gradient(100deg, #8fa9d3 0, #7e9bcb 8%, #2f5a9b 14%, #2c5795 45%, #356cb8 55%, #4a85d0 66%, #3268b4 82%, #5585c4 100%) 0 0 / 100% 24px no-repeat, linear-gradient(#8fabd6, #c3d6ee 150px, #335fa5 152px, #2f60a8);
    box-shadow: inset 0 0 0 1px rgba(190, 215, 245, .7), 0 2px 10px 3px rgba(0, 0, 0, .65);
}

.dialog-title {
    height: 23px;
    display: flex;
    align-items: center;
    font-family: var(--segoe);
}

.dialog-title h2 {
    flex: 1;
    margin-left: 4px;
    font-size: 9px;
    font-weight: 400;
}

.dialog-buttons {
    display: flex;
    align-self: flex-start;
    margin-right: -1px;
    border: 1px solid #2c3e5e;
    border-top: none;
    border-radius: 0 0 4px 4px;
    overflow: hidden;
}

.dialog-buttons button {
    width: 22px;
    height: 14px;
    display: grid;
    place-items: center;
    background: linear-gradient(#a3bbdc, #6e8fc0 50%, #4c73ae 51%, #7b9ccc);
    color: #fff;
    font-size: 10px;
    font-weight: 700;
    text-shadow: 0 0 2px #222;
}

.dialog-buttons .close {
    width: 36px;
    border-left: 1px solid #4e1f1f;
    background: linear-gradient(#dba294, #c76552 48%, #a82a15 52%, #cf6a4a);
}

.dialog-buttons svg {
    width: 12px;
    height: 10px;
}

.dialog-body {
    display: flex;
    flex-direction: column;
    gap: 6px;
    padding: 8px 7px 9px;
    border: 1px solid #2f4468;
    background: var(--face);
}

.row {
    min-height: 16px;
    display: flex;
    align-items: center;
    gap: 6px;
}

.main-label {
    width: 75px;
}

.text {
    flex: 1;
    height: 16px;
    padding: 0 1px;
    border: 1px solid #b5cfe7;
    border-top-color: #3d7bad;
    background: #fff;
    outline: none;
}

.third {
    width: 74px;
}

.select {
    flex: 1;
    position: relative;
}

.select select {
    display: block;
    width: 100%;
    height: 16px;
    padding: 0 2px;
    appearance: none;
    border: 1px solid #808080;
    border-radius: 2px;
    background: linear-gradient(#f0f0f0, #e8e8e8 45%, #dadada 55%, #cfcfcf);
}

.select::after {
    content: '';
    position: absolute;
    top: 6px;
    right: 4px;
    border: 3px solid transparent;
    border-top: 4px solid #000;
    border-bottom: none;
    pointer-events: none;
}

.group {
    min-width: 0;
    padding: 7px;
    border: 1px solid var(--group);
    border-radius: 3px;
}

.group legend {
    margin-left: -3px;
    padding: 0 2px;
}

.auto {
    display: flex;
    gap: 6px;
}

.auto .group {
    flex: 1;
}

.square {
    flex: none;
    width: 17px;
}

.square svg {
    width: 12px;
    height: 12px;
}

.check {
    display: flex;
    align-items: center;
    gap: 4px;
}

input[type="checkbox"] {
    width: 10px;
    height: 10px;
    appearance: none;
    display: grid;
    place-items: center;
    border: 1px solid #8b8f94;
    box-shadow: inset 0 0 0 1px #f6f6f6;
    background: linear-gradient(135deg, #cdd2d8, #f4f5f6);
}

input[type="checkbox"]:checked::after {
    content: '';
    width: 4px;
    height: 7px;
    margin-bottom: 3px;
    border: solid #3c5aa6;
    border-width: 0 2px 2px 0;
    transform: rotate(35deg);
}

input[type="radio"] {
    width: 10px;
    height: 10px;
    appearance: none;
    border: 1px solid #8e9296;
    border-radius: 50%;
    background: radial-gradient(#d5d8db, #f6f6f6);
}

input[type="radio"]:checked {
    background: radial-gradient(circle, #5cc5ef 0, #155a86 2px, #0c3148 3px, #eee 3px);
}

.general {
    padding-right: 11px;
}

.slider {
    flex: 1;
    height: 16px;
    appearance: none;
    background: none;
}

.slider::-webkit-slider-runnable-track {
    height: 3px;
    border: 1px solid #d0d0d0;
    border-top-color: #b0b0b0;
    background: #e4e4e4;
}

.slider::-webkit-slider-thumb {
    width: 8px;
    height: 14px;
    margin-top: -6px;
    appearance: none;
    border: 1px solid #777;
    border-radius: 2px;
    background: linear-gradient(90deg, #fff, #d4d4d4);
}

.general output {
    margin-right: 16px;
}

.general .check:last-child {
    margin-left: 20px;
}

/* Schede */
.tabs {
    display: flex;
    align-items: flex-end;
    margin: 5px 7px -7px;
    position: relative;
}

.tabs button {
    height: 15px;
    padding: 0 9px 0 10px;
    border: 1px solid #8c8e94;
    border-left: none;
    background: linear-gradient(#f2f2f2, #e9e9e9 50%, #d8d8d8);
}

.tabs [aria-selected="true"] {
    height: 17px;
    padding: 0 10px 2px;
    border-left: 1px solid #8c8e94;
    border-bottom-color: #fff;
    background: #fff;
}

.tab-panel {
    display: flex;
    gap: 13px;
    margin: 0 7px;
    padding: 9px 8px 18px;
    border: 1px solid #8c8e94;
    background: #fff;
}

.extruders {
    width: 182px;
    display: flex;
    flex-direction: column;
    gap: 6px;
}

.extruders p {
    text-align: center;
    white-space: nowrap;
}

.extruders .list {
    margin-top: -3px;
    padding: 1px;
}

.extruders li {
    height: 14px;
    padding: 0 2px;
    font-family: var(--segoe);
    font-size: 9px;
    line-height: 14px;
}

.details {
    flex: 1;
}

.details h3 {
    margin-bottom: 6px;
    font-size: 16px;
    font-weight: 400;
    line-height: 18px;
}

.overview {
    margin-bottom: 15px;
}

.overview,
.ooze {
    padding: 6px 7px 3px;
}

.overview .row {
    height: 20px;
}

.overview .width-row {
    gap: 8px;
}

.index {
    flex: none;
    width: 190px;
}

.nozzle-label {
    width: 98px;
}

.spin {
    width: 46px;
    height: 16px;
    display: flex;
    border: 1px solid #e0e3e8;
    border-top-color: #b8bcc4;
    background: #fff;
}

.spin input {
    flex: 1;
    min-width: 0;
    padding-left: 2px;
    border: none;
    background: none;
    outline: none;
}

.arrows {
    width: 12px;
    display: flex;
    flex-direction: column;
    padding: 1px;
}

.arrows button {
    flex: 1;
    display: grid;
    place-items: center;
    border: 1px solid #c0c4cc;
    background: #eee;
}

.arrows button::after {
    content: '';
    border: 2px solid transparent;
    border-bottom: 3px solid #6478b4;
    border-top: none;
}

.arrows button:last-child::after {
    transform: rotate(180deg);
}

.spin:has(input:disabled) {
    border-color: #afafaf;
    background: #f0f0f0;
    color: #8a8a8a;
}

.arrows button:disabled::after {
    border-bottom-color: #9a9a9a;
}

.ooze-grid {
    display: grid;
    grid-template-columns: 91px 150px 55px 1fr;
    grid-auto-rows: 20px;
    align-items: center;
}

.ooze-grid .second {
    grid-column: 2;
}

.ooze-grid .spin {
    width: auto;
}

.ooze-grid > span:not(.spin) {
    padding-left: 5px;
}

.dialog-footer {
    display: flex;
    gap: 6px;
    margin-top: 7px;
}

.dialog-footer .btn {
    height: 17px;
    padding: 0 7px;
}

.dialog-footer .ok,
.dialog-footer .cancel {
    width: 58px;
}

.dialog-footer .ok {
    margin-left: auto;
    border-color: #2d8fbf;
    box-shadow: inset 0 0 0 1px #5cd0f5;
}
```
FILE: script.js
```js
// Griglia del piano di stampa in prospettiva
const BOTTOM = 744;
const HORIZON = -2211;

function drawLines(vanishX, startX, step, count) {
    const scale = (BOTTOM - HORIZON) / -HORIZON;
    for (let i = 0; i <= count; i++) {
        const x = startX + step * i;
        const line = document.createElementNS('http://www.w3.org/2000/svg', 'line');
        line.setAttribute('x1', x);
        line.setAttribute('y1', 0);
        line.setAttribute('x2', vanishX + (x - vanishX) * scale);
        line.setAttribute('y2', BOTTOM);
        document.getElementById(i % 5 === 0 ? 'major' : 'minor').appendChild(line);
    }
}

drawLines(-6808, 489, -29.1, 78);
drawLines(4699, 108, 21.5, 80);

// Cursore alla fine del nome
const nome = document.getElementById('nome');
nome.focus();
nome.setSelectionRange(nome.value.length, nome.value.length);
```
